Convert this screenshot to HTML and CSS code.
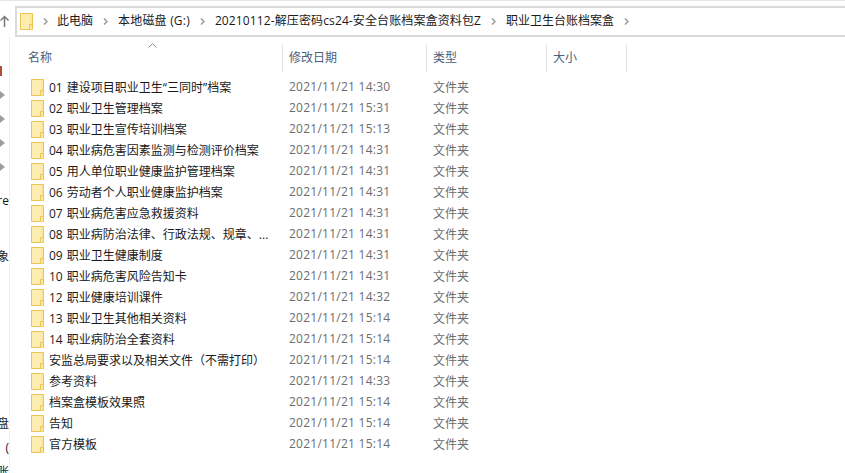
FILE: index.html
```html
<!DOCTYPE html>
<html lang="zh-CN">
<head>
  <meta charset="UTF-8">
  <title>职业卫生台账档案盒</title>
  <link rel="stylesheet" href="styles.css">
</head>
<body>
  <svg class="defs" width="0" height="0">
    <symbol id="folder" viewBox="0 0 13 17">
      <path d="M.5.5h12v16H.5z" fill="#fde79c" stroke="#eac556"/>
      <path d="M1 1h9v10H9v5H1z" fill="#feedb0"/>
      <path d="M9.500 16.500v-5h3v5" fill="#fde79c" stroke="#eac556"/>
    </symbol>
    <symbol id="chev" viewBox="0 0 5 7">
      <path d="M1 .5 4 3.500 1 6.500" fill="none" stroke="#999" stroke-width="1.500"/>
    </symbol>
  </svg>

  <div class="topbar">
    <div class="up-col">
      <svg width="10" height="12" viewBox="0 0 10 12"><path d="M4.500 12V1.500M.5 5.500l4-4 4 4" fill="none" stroke="#777" stroke-width="1.500"/></svg>
    </div>
    <div class="address">
      <svg class="addr-folder" width="13" height="17"><use href="#folder"/></svg>
      <span class="crumb-sep"><svg width="5" height="7"><use href="#chev"/></svg></span>
      <span class="crumb">此电脑</span>
      <span class="crumb-sep"><svg width="5" height="7"><use href="#chev"/></svg></span>
      <span class="crumb crumb-drive">本地磁盘 (G:)</span>
      <span class="crumb-sep"><svg width="5" height="7"><use href="#chev"/></svg></span>
      <span class="crumb crumb-long">20210112-解压密码cs24-安全台账档案盒资料包Z</span>
      <span class="crumb-sep"><svg width="5" height="7"><use href="#chev"/></svg></span>
      <span class="crumb">职业卫生台账档案盒</span>
      <span class="crumb-sep"><svg width="5" height="7"><use href="#chev"/></svg></span>
    </div>
  </div>

  <div class="body-wrap">
    <div class="nav-pane">
      <div class="nav-item nav-red"><i class="red-mark"></i></div>
      <div class="nav-item"><i class="pin"></i></div>
      <div class="nav-item"><i class="pin"></i></div>
      <div class="nav-item"><i class="pin"></i></div>
      <div class="nav-item"><i class="pin"></i></div>
      <div class="nav-item nav-re">re</div>
      <div class="nav-item nav-xiang">象</div>
      <div class="nav-item nav-pan">盘</div>
      <div class="nav-item">(</div>
      <div class="nav-item">账</div>
    </div>

    <div class="files">
      <div class="head">
        <span class="sort-caret"><svg width="9" height="5" viewBox="0 0 9 5"><path d="M.5 4.500 4.500.8l4 3.700" fill="none" stroke="#888"/></svg></span>
        <div class="head-cell col-name">名称</div>
        <div class="head-cell col-date">修改日期</div>
        <div class="head-cell col-type">类型</div>
        <div class="head-cell col-size">大小</div>
      </div>

      <div class="rows">
        <div class="row"><svg class="ficon"><use href="#folder"/></svg><span class="name">01 建设项目职业卫生“三同时”档案</span><span class="date">2021/11/21 14:30</span><span class="type">文件夹</span></div>
        <div class="row"><svg class="ficon"><use href="#folder"/></svg><span class="name">02 职业卫生管理档案</span><span class="date">2021/11/21 15:31</span><span class="type">文件夹</span></div>
        <div class="row"><svg class="ficon"><use href="#folder"/></svg><span class="name">03 职业卫生宣传培训档案</span><span class="date">2021/11/21 15:13</span><span class="type">文件夹</span></div>
        <div class="row"><svg class="ficon"><use href="#folder"/></svg><span class="name">04 职业病危害因素监测与检测评价档案</span><span class="date">2021/11/21 14:31</span><span class="type">文件夹</span></div>
        <div class="row"><svg class="ficon"><use href="#folder"/></svg><span class="name">05 用人单位职业健康监护管理档案</span><span class="date">2021/11/21 14:31</span><span class="type">文件夹</span></div>
        <div class="row"><svg class="ficon"><use href="#folder"/></svg><span class="name">06 劳动者个人职业健康监护档案</span><span class="date">2021/11/21 14:31</span><span class="type">文件夹</span></div>
        <div class="row"><svg class="ficon"><use href="#folder"/></svg><span class="name">07 职业病危害应急救援资料</span><span class="date">2021/11/21 14:31</span><span class="type">文件夹</span></div>
        <div class="row"><svg class="ficon"><use href="#folder"/></svg><span class="name">08 职业病防治法律、行政法规、规章、...</span><span class="date">2021/11/21 14:31</span><span class="type">文件夹</span></div>
        <div class="row"><svg class="ficon"><use href="#folder"/></svg><span class="name">09 职业卫生健康制度</span><span class="date">2021/11/21 14:31</span><span class="type">文件夹</span></div>
        <div class="row"><svg class="ficon"><use href="#folder"/></svg><span class="name">10 职业病危害风险告知卡</span><span class="date">2021/11/21 14:31</span><span class="type">文件夹</span></div>
        <div class="row"><svg class="ficon"><use href="#folder"/></svg><span class="name">12 职业健康培训课件</span><span class="date">2021/11/21 14:32</span><span class="type">文件夹</span></div>
        <div class="row"><svg class="ficon"><use href="#folder"/></svg><span class="name">13 职业卫生其他相关资料</span><span class="date">2021/11/21 15:14</span><span class="type">文件夹</span></div>
        <div class="row"><svg class="ficon"><use href="#folder"/></svg><span class="name">14 职业病防治全套资料</span><span class="date">2021/11/21 15:14</span><span class="type">文件夹</span></div>
        <div class="row"><svg class="ficon"><use href="#folder"/></svg><span class="name">安监总局要求以及相关文件（不需打印）</span><span class="date">2021/11/21 15:14</span><span class="type">文件夹</span></div>
        <div class="row"><svg class="ficon"><use href="#folder"/></svg><span class="name">参考资料</span><span class="date">2021/11/21 14:33</span><span class="type">文件夹</span></div>
        <div class="row"><svg class="ficon"><use href="#folder"/></svg><span class="name">档案盒模板效果照</span><span class="date">2021/11/21 15:14</span><span class="type">文件夹</span></div>
        <div class="row"><svg class="ficon"><use href="#folder"/></svg><span class="name">告知</span><span class="date">2021/11/21 15:14</span><span class="type">文件夹</span></div>
        <div class="row"><svg class="ficon"><use href="#folder"/></svg><span class="name">官方模板</span><span class="date">2021/11/21 15:14</span><span class="type">文件夹</span></div>
      </div>
    </div>
  </div>
</body>
</html>
```

FILE: styles.css
```css
html, body {
  height: 100%;
  margin: 0;
  padding: 0;
  overflow: hidden;
}
body {
  background: #fff;
  color: #1a1a1a;
  font-family: "Open Sans", "Noto Sans CJK SC", sans-serif;
  font-size: 12px;
  border-top: 1px solid #e6e6e6;
  box-sizing: border-box;
}
.defs {
  display: block;
  height: 0;
}

/* address bar */
.topbar {
  display: flex;
  height: 36px;
  padding-top: 5px;
  box-sizing: border-box;
}
.up-col {
  width: 15px;
  flex: none;
  display: flex;
  align-items: center;
  padding-bottom: 1px;
  box-sizing: border-box;
}
.address {
  flex: 1;
  display: flex;
  align-items: center;
  height: 31px;
  border: 2px solid #dadada;
  border-right: none;
  padding-left: 3px;
  box-sizing: border-box;
  white-space: nowrap;
}
.addr-folder {
  flex: none;
}
.crumb {
  line-height: 25px;
  padding-bottom: 2px;
}
.crumb-drive {
  letter-spacing: 0.2px;
}
.crumb-long {
  letter-spacing: 0.12px;
}
.crumb-sep {
  display: flex;
  align-items: center;
  justify-content: center;
  width: 25px;
  height: 27px;
}
.addr-folder + .crumb-sep {
  width: 24px;
}

/* left nav, only a sliver of it shows */
.body-wrap {
  display: flex;
  height: 436px;
}
.nav-pane {
  width: 9px;
  flex: none;
  border-right: 1px solid #f0f0f0;
  overflow: hidden;
  padding-top: 22px;
}
.nav-item {
  display: flex;
  justify-content: flex-end;
  align-items: center;
  height: 24px;
  white-space: nowrap;
}
.nav-red {
  justify-content: flex-start;
}
.red-mark {
  display: block;
  width: 2px;
  height: 10px;
  background: #b5493a;
}
.pin {
  display: block;
  width: 0;
  height: 0;
  margin-right: 4px;
  border-left: 5px solid #9a9fa3;
  border-top: 4px solid transparent;
  border-bottom: 4px solid transparent;
}
.nav-re { margin-top: 9px; }
.nav-xiang { margin-top: 32px; }
.nav-pan { margin-top: 143px; }

/* file list */
.files {
  flex: 1;
  min-width: 0;
}
.head {
  position: relative;
  display: flex;
  height: 28px;
  margin-top: 7px;
  color: #4c607a;
}
.sort-caret {
  position: absolute;
  left: 138px;
  top: -1px;
  line-height: 0;
}
.head-cell {
  box-sizing: border-box;
  padding-left: 6px;
  line-height: 28px;
  border-right: 1px solid #e5e5e5;
}
.col-name { width: 273px; padding-left: 18px; }
.col-date { width: 144px; }
.col-type { width: 120px; }
.col-size { width: 80px; }

.rows {
  margin-top: 4px;
}
.row {
  display: grid;
  grid-template-columns: 21px 18px 240px 144px 1fr;
  height: 21px;
  align-items: center;
  white-space: nowrap;
}
.ficon {
  grid-column: 2;
  width: 13px;
  height: 17px;
  margin-top: 2px;
}
.name {
  grid-column: 3;
  word-spacing: 1px;
}
.date {
  color: #6d6d6d;
  letter-spacing: 0.25px;
}
.type {
  color: #6d6d6d;
}
```
